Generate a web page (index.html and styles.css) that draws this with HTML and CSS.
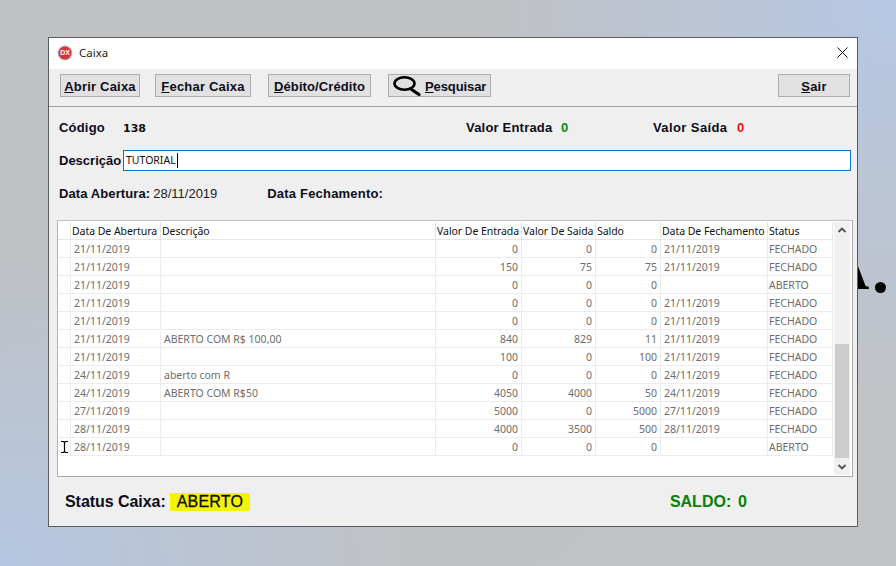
FILE: index.html
```html
<!DOCTYPE html>
<html lang="pt">
<head>
<meta charset="utf-8">
<title>Caixa</title>
<link rel="stylesheet" href="styles.css">
</head>
<body>
<div class="behind"><span class="behind-a">A</span><span class="behind-dot"></span></div>
<main class="window">
  <header class="titlebar">
    <svg class="app-icon" width="16" height="16" viewBox="0 0 16 16"><circle cx="8" cy="8" r="7.5" fill="#b9b9b9"/><circle cx="8" cy="8" r="6.4" fill="#d8343c"/><text x="8" y="10.4" text-anchor="middle" class="app-icon-text">DX</text></svg>
    <span class="title">Caixa</span>
    <svg class="close" width="11" height="11" viewBox="0 0 11 11"><path d="M.5.5l10 10M10.5.5l-10 10" stroke="#111" stroke-width="1" fill="none"/></svg>
  </header>
  <nav class="toolbar">
    <button class="btn btn-abrir"><u>A</u>brir Caixa</button>
    <button class="btn btn-fechar"><u>F</u>echar Caixa</button>
    <button class="btn btn-debito"><u>D</u>ébito/Crédito</button>
    <button class="btn btn-pesq">
      <svg width="30" height="23" viewBox="0 0 30 23"><ellipse cx="12.500" cy="9.500" rx="10" ry="6.300" fill="none" stroke="#000" stroke-width="2.600"/><path d="M19.500 15.500l7.500 5" stroke="#000" stroke-width="3.200" stroke-linecap="round"/></svg>
      <span><u>P</u>esquisar</span>
    </button>
    <button class="btn btn-sair"><u>S</u>air</button>
  </nav>
  <section class="form">
    <div class="row-codigo">
      <span class="lbl lbl-codigo">Código</span>
      <span class="code">138</span>
      <span class="lbl lbl-entrada">Valor Entrada</span>
      <span class="lbl val-green">0</span>
      <span class="lbl lbl-saida">Valor Saída</span>
      <span class="lbl val-red">0</span>
    </div>
    <div class="row-desc">
      <span class="lbl lbl-desc">Descrição</span>
      <div class="input">TUTORIAL<i class="caret"></i></div>
    </div>
    <div class="row-datas">
      <span class="lbl lbl-abertura">Data Abertura:</span>
      <span class="date-val">28/11/2019</span>
      <span class="lbl lbl-fech">Data Fechamento:</span>
    </div>
  </section>
  <section class="grid-panel">
    <div class="grid-wrap">
      <table class="grid">
        <colgroup><col class="c0"><col class="c1"><col class="c2"><col class="c3"><col class="c4"><col class="c5"><col class="c6"><col class="c7"></colgroup>
        <thead><tr><th></th><th>Data De Abertura</th><th>Descrição</th><th>Valor De Entrada</th><th>Valor De Saida</th><th>Saldo</th><th>Data De Fechamento</th><th>Status</th></tr></thead>
        <tbody>
          <tr><td></td><td>21/11/2019</td><td></td><td class="n">0</td><td class="n">0</td><td class="n">0</td><td>21/11/2019</td><td>FECHADO</td></tr>
          <tr><td></td><td>21/11/2019</td><td></td><td class="n">150</td><td class="n">75</td><td class="n">75</td><td>21/11/2019</td><td>FECHADO</td></tr>
          <tr><td></td><td>21/11/2019</td><td></td><td class="n">0</td><td class="n">0</td><td class="n">0</td><td></td><td>ABERTO</td></tr>
          <tr><td></td><td>21/11/2019</td><td></td><td class="n">0</td><td class="n">0</td><td class="n">0</td><td>21/11/2019</td><td>FECHADO</td></tr>
          <tr><td></td><td>21/11/2019</td><td></td><td class="n">0</td><td class="n">0</td><td class="n">0</td><td>21/11/2019</td><td>FECHADO</td></tr>
          <tr><td></td><td>21/11/2019</td><td>ABERTO COM R$ 100,00</td><td class="n">840</td><td class="n">829</td><td class="n">11</td><td>21/11/2019</td><td>FECHADO</td></tr>
          <tr><td></td><td>21/11/2019</td><td></td><td class="n">100</td><td class="n">0</td><td class="n">100</td><td>21/11/2019</td><td>FECHADO</td></tr>
          <tr><td></td><td>24/11/2019</td><td>aberto com R</td><td class="n">0</td><td class="n">0</td><td class="n">0</td><td>24/11/2019</td><td>FECHADO</td></tr>
          <tr><td></td><td>24/11/2019</td><td>ABERTO COM R$50</td><td class="n">4050</td><td class="n">4000</td><td class="n">50</td><td>24/11/2019</td><td>FECHADO</td></tr>
          <tr><td></td><td>27/11/2019</td><td></td><td class="n">5000</td><td class="n">0</td><td class="n">5000</td><td>27/11/2019</td><td>FECHADO</td></tr>
          <tr><td></td><td>28/11/2019</td><td></td><td class="n">4000</td><td class="n">3500</td><td class="n">500</td><td>28/11/2019</td><td>FECHADO</td></tr>
          <tr><td class="ind"><svg width="7" height="12" viewBox="0 0 7 12"><path d="M0 .5h2.500l1 1 1-1H7M3.500 1.500v9M0 11.500h2.500l1-1 1 1H7" stroke="#000" stroke-width="1.200" fill="none"/></svg></td><td>28/11/2019</td><td></td><td class="n">0</td><td class="n">0</td><td class="n">0</td><td></td><td>ABERTO</td></tr>
        </tbody>
      </table>
    </div>
    <div class="scrollbar">
      <svg class="arrow" width="16" height="17" viewBox="0 0 16 17"><path d="M4.500 10L8 6.500l3.500 3.500" stroke="#505050" stroke-width="1.800" fill="none"/></svg>
      <div class="track"><div class="thumb"></div></div>
      <svg class="arrow" width="16" height="17" viewBox="0 0 16 17"><path d="M4.500 7L8 10.500 11.500 7" stroke="#505050" stroke-width="1.800" fill="none"/></svg>
    </div>
  </section>
  <footer class="status">
    <span class="status-lbl">Status Caixa:</span>
    <mark class="status-val">ABERTO</mark>
    <span class="saldo">SALDO:&nbsp; 0</span>
  </footer>
</main>
</body>
</html>
```
FILE: styles.css
```css
* { box-sizing: border-box; }
html, body { margin: 0; height: 100%; }
body {
  width: 896px; height: 566px; overflow: hidden; position: relative;
  padding: 37px 0 0 48px;
  font-family: "Liberation Sans", Arial, sans-serif;
  background:
    radial-gradient(ellipse 420px 330px at 0 566px, #b5c7e2 0%, rgba(181,199,226,0) 100%),
    radial-gradient(ellipse 420px 420px at 896px 0, #b6c8e4 0%, rgba(182,200,228,0) 100%),
    linear-gradient(135deg, #bfc0c2, #c1c2c4);
}
.behind { position: absolute; left: 848px; top: 262px; width: 48px; height: 34px; }
.behind-a { position: absolute; left: -25px; top: -26px; font: 700 64px/64px "Liberation Serif", serif; color: #000; }
.behind-dot { position: absolute; left: 27px; top: 20px; width: 11px; height: 11px; border-radius: 50%; background: #000; }
.window {
  position: relative; width: 810px; height: 490px;
  border: 1px solid #5a5d60; background: #efefef;
  display: flex; flex-direction: column;
}
.titlebar { height: 31px; background: #fff; display: flex; align-items: center; padding: 0 9px 2px 8px; flex: none; }
.app-icon { flex: none; }
.app-icon-text { font: 700 7px "Liberation Sans", sans-serif; fill: #fff; }
.title { margin-left: 6px; font: 11.5px "Noto Sans", Tahoma, sans-serif; color: #222; flex: 1; }
.close { flex: none; }
.toolbar { height: 38px; flex: none; display: flex; align-items: flex-start; padding: 5px 7px 0 11px; border-bottom: 1px solid #a0a0a0; }
.btn {
  height: 23px; padding: 1px 0 0; margin: 0; background: #e1e1e1; border: 1px solid #adadad;
  font: 700 13px "Liberation Sans", sans-serif; color: #0d0d1a; letter-spacing: .2px;
  display: flex; align-items: center; justify-content: center;
}
.btn-abrir { width: 80px; }
.btn-fechar { width: 96px; margin-left: 15px; }
.btn-debito { width: 103px; margin-left: 17px; letter-spacing: .1px; }
.btn-pesq { width: 103px; margin-left: 17px; justify-content: flex-start; padding: 0 0 0 3px; gap: 3px; letter-spacing: -.1px; }
.btn-pesq span { padding-top: 1px; }
.btn-sair { width: 72px; margin-left: auto; }
.form { flex: none; padding: 0 6px 0 10px; height: 113px; }
.lbl { font: 700 13px "Liberation Sans", sans-serif; color: #0d0d1a; letter-spacing: .2px; white-space: nowrap; }
.row-codigo { display: flex; align-items: center; height: 40px; }
.lbl-codigo { width: 64px; }
.code { font: 700 11px "DejaVu Sans", sans-serif; color: #111; width: 343px; margin-top: 2px; }
.lbl-entrada { width: 95px; }
.val-green { color: #0a8a0a; width: 92px; }
.lbl-saida { width: 84px; letter-spacing: .4px; }
.val-red { color: #f01010; }
.row-desc { display: flex; align-items: center; height: 21px; margin-top: 3px; }
.lbl-desc { width: 64px; letter-spacing: 0; }
.input {
  width: 728px; height: 21px; background: #fff; border: 1px solid #0078d7;
  font: 10.5px/19px "Noto Sans", Tahoma, sans-serif; color: #111; padding-left: 2px;
  display: flex; align-items: center;
}
.caret { width: 1px; height: 15px; background: #000; margin-left: 1px; }
.row-datas { display: flex; align-items: center; height: 44px; }
.lbl-abertura { letter-spacing: .1px; }
.date-val { font: 13px "Liberation Sans", sans-serif; color: #222; margin-left: 3px; width: 114px; }
.grid-panel {
  flex: none; margin-left: 8px; width: 796px; height: 257px; background: #fff;
  border: 1px solid #a9a9a9; border-left-color: #b5b5b5; border-top-color: #c0c0c0;
  display: flex; padding: 1px 2px 0 0;
}
.grid-wrap { width: 776px; flex: none; }
.grid { border-collapse: separate; border-spacing: 0; table-layout: fixed; width: 775px; font: 10.5px/15px "Noto Sans", Tahoma, sans-serif; }
.c0 { width: 13px; } .c1 { width: 90px; } .c2 { width: 275px; } .c3 { width: 86px; }
.c4 { width: 74px; } .c5 { width: 65px; } .c6 { width: 107px; } .c7 { width: 65px; }
th {
  height: 18px; padding: 2px 0 0 1px; font-weight: 400; text-align: left; color: #111; white-space: nowrap; overflow: hidden; letter-spacing: -.05px;
  border-right: 1px solid #e6e6e6; border-bottom: 1px solid #e6e6e6;
}
td {
  height: 18px; padding: 2px 3px 0; color: #6d6d6d; white-space: nowrap; overflow: hidden;
  border-right: 1px solid #ececec; border-bottom: 1px solid #ececec;
}
td.n { text-align: right; }
td:last-child { padding-left: 1px; }
td:first-child, th:first-child { padding: 0; }
.ind { padding: 0 0 0 3px !important; vertical-align: middle; }
.ind svg { display: block; }
.scrollbar { width: 16px; flex: none; background: #f0f0f0; display: flex; flex-direction: column; height: 253px; }
.arrow { flex: none; display: block; }
.track { flex: 1; display: flex; flex-direction: column; justify-content: flex-end; padding: 0 1px; }
.thumb { height: 114px; background: #cdcdcd; }
.status { flex: 1; display: flex; align-items: center; padding: 1px 0 0 16px; position: relative; }
.status-lbl { font: 700 16px "Liberation Sans", sans-serif; color: #0d0d1a; letter-spacing: -.05px; }
.status-val { margin-left: 4px; width: 80px; height: 18px; background: #f4f400; color: #0d0d1a; font: 16px/18px "Liberation Sans", sans-serif; padding-left: 7px; letter-spacing: .2px; -webkit-text-stroke: .3px #0d0d1a; }
.saldo { margin-left: auto; margin-right: 110px; font: 700 16px "Liberation Sans", sans-serif; color: #087f08; word-spacing: -1px; }
```
